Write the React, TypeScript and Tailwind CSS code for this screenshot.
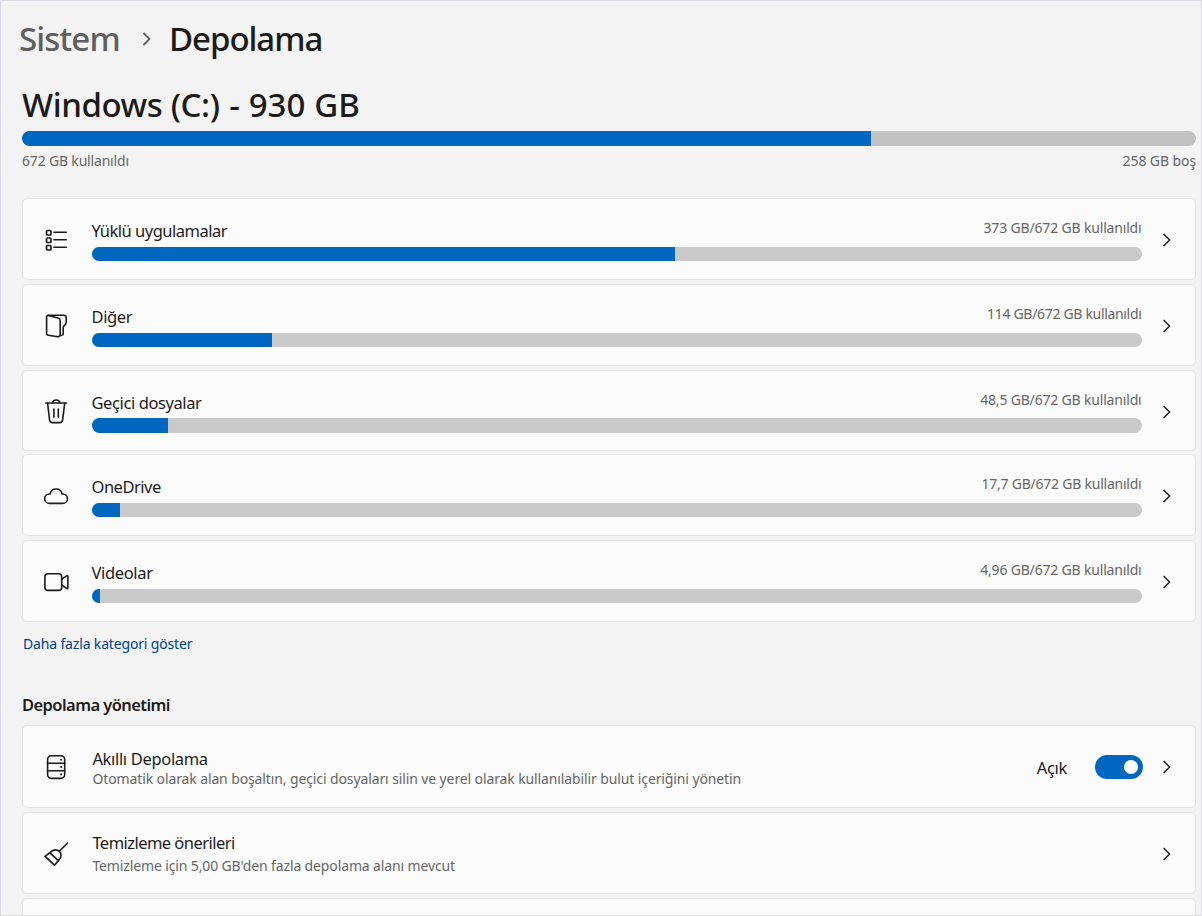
import { type ReactNode } from "react";
import clsx from "clsx";

const Icon = ({ children }: { children: ReactNode }) => (
  <svg
    width="28"
    height="28"
    viewBox="0 0 28 28"
    fill="none"
    stroke="#1b1b1b"
    strokeWidth="1.6"
    strokeLinecap="round"
    strokeLinejoin="round"
    className="shrink-0"
  >
    {children}
  </svg>
);

const AppsIcon = () => (
  <Icon>
    <g strokeWidth="1.7">
      <rect x="4.5" y="4.5" width="4.5" height="4.5" rx="1" />
      <rect x="4.5" y="12" width="4.5" height="4.5" rx="1" />
      <rect x="4.5" y="19.5" width="4.5" height="4.5" rx="1" />
    </g>
    <path d="M11.9 6.3H24.3M11.9 13.7H24.3M11.9 21.2H24.3" strokeWidth="1.5" />
  </Icon>
);

const OtherIcon = () => (
  <Icon>
    <path d="M6.1 3.5 16.2 6A2.3 2.3 0 0 1 18.2 8.2V22.6A2.1 2.1 0 0 1 15.8 24.7L6.3 23.3A1.9 1.9 0 0 1 4.6 21.4V4.9A1.3 1.3 0 0 1 6.1 3.5Z" />
    <path d="M5.8 3.2H21.8A2.4 2.4 0 0 1 24.2 5.6V10.2C24.2 13.4 21.2 12.8 21.2 15.8V21.4A2 2 0 0 1 18.3 23.2" />
  </Icon>
);

const TrashIcon = () => (
  <Icon>
    <path d="M3.8 5H24.5M10.7 4.8a3.5 2.8 0 0 1 7 0" />
    <path d="M5.6 5.2 7.6 22.2A2.7 2.7 0 0 0 10.3 24.6H17.9A2.7 2.7 0 0 0 20.6 22.2L22.7 5.2" />
    <path d="M11.9 11.1V19.3M16.3 11.1V19.3" />
  </Icon>
);

const CloudIcon = () => (
  <Icon>
    <path d="M7.4 21.4a4.7 4.7 0 0 1 0-9.4h.7a6.1 6.1 0 0 1 12 0h.7a4.7 4.7 0 0 1 0 9.4Z" />
  </Icon>
);

const VideoIcon = () => (
  <Icon>
    <rect x="2.9" y="5.8" width="16.8" height="16.6" rx="3" />
    <path d="M19.8 11.2 24.6 7.8A.8.8 0 0 1 25.9 8.5V19.7A.8.8 0 0 1 24.6 20.4L19.8 17" />
  </Icon>
);

const StorageIcon = () => (
  <Icon>
    <rect x="5.6" y="2.8" width="17.1" height="22.6" rx="3.8" />
    <path d="M5.6 10.3H22.7M5.6 17.8H22.7" />
    <path d="M19.1 6.7v.1M19.1 14v.1M19.1 21.3v.1" strokeWidth="2" />
  </Icon>
);

const BroomIcon = () => (
  <Icon>
    <path d="M25.4 3.2 17.8 10.7" />
    <path d="M3 16.4 9.2 11.6C11.6 9.3 15.2 9.3 17.4 11.3S19.5 17 17.4 19.4L12.5 25.2Z" />
    <path d="M7.9 12.8 16.3 20.7" />
  </Icon>
);

const Chevron = () => (
  <svg width="8" height="14" viewBox="0 0 8 14" fill="none" stroke="#222" strokeWidth="1.5" className="shrink-0">
    <path d="M.6 1 6.6 7 .6 13" />
  </svg>
);

const categories = [
  { name: "Yüklü uygulamalar", nameClass: "tracking-[-0.5px]", usage: "373 GB/672 GB kullanıldı", usageClass: "tracking-[-0.17px]", fill: 583, icon: <AppsIcon />, size: "h-[82px] mb-1" },
  { name: "Diğer", nameClass: "tracking-[-0.4px]", usage: "114 GB/672 GB kullanıldı", usageClass: "tracking-[-0.32px]", fill: 180, icon: <OtherIcon />, size: "h-[82px] mb-1" },
  { name: "Geçici dosyalar", nameClass: "tracking-[-0.4px]", usage: "48,5 GB/672 GB kullanıldı", usageClass: "tracking-[-0.18px]", fill: 76.5, icon: <TrashIcon />, size: "h-[81px] mb-[3px]" },
  { name: "OneDrive", nameClass: "tracking-[-0.5px]", usage: "17,7 GB/672 GB kullanıldı", usageClass: "tracking-[-0.23px]", fill: 28, icon: <CloudIcon />, size: "h-[82px] mb-1" },
  { name: "Videolar", nameClass: "tracking-[-0.35px]", usage: "4,96 GB/672 GB kullanıldı", usageClass: "tracking-[-0.18px]", fill: 8, icon: <VideoIcon />, size: "h-[82px]" },
];

const Bar = ({ fill, className }: { fill: number; className?: string }) => (
  <div className={clsx("overflow-hidden rounded-full", className)}>
    <div className="h-full bg-[#0067c0]" style={{ width: fill }} />
  </div>
);

const card = "flex items-center rounded-[5px] border border-[#e5e5e5] bg-[#fbfbfb] pl-[19px] pr-6";

export default function App() {
  return (
    <div className="h-[916px] w-[1202px] overflow-hidden border border-[#d9dae6] bg-[#f3f3f3] pl-[21px] pr-[5px] font-['Noto_Sans',sans-serif] text-[#1b1b1b]">
      <nav className="-ml-[3px] flex h-[76px] items-center text-[33px] font-medium">
        <span className="w-[123px] tracking-[-0.85px] text-[#5f5f5f]">Sistem</span>
        <svg width="9" height="14" viewBox="0 0 9 14" fill="none" stroke="#5f5f5f" strokeWidth="1.8">
          <path d="M1.5 1 7.5 7 1.5 13" />
        </svg>
        <span className="ml-[18px] tracking-[-1.05px]">Depolama</span>
      </nav>

      <h1 className="mt-[9px] h-[45px] whitespace-nowrap text-[33px] font-medium leading-[38px]">
        <span className="tracking-[-0.4px]">Windows (C:)</span>
        <span className="ml-px tracking-[0.1px]"> - 930 GB</span>
      </h1>
      <Bar fill={848.5} className="h-[14.5px] bg-[#c2c2c2]" />
      <div className="mt-[5.5px] flex h-[47px] justify-between text-[14px] leading-[20px] text-[#666]">
        <span className="tracking-[-0.18px]">672 GB kullanıldı</span>
        <span className="tracking-[-0.1px]">258 GB boş</span>
      </div>

      {categories.map((c) => (
        <div key={c.name} className={clsx(card, "justify-between pt-[2px]", c.size)}>
          {c.icon}
          <div className="h-[42px] w-[1050px]">
            <div className="flex h-[27.5px] justify-between">
              <span className={clsx("mt-[1px] text-[16.5px] leading-[22px]", c.nameClass)}>{c.name}</span>
              <span className={clsx("text-[14px] leading-[18px] text-[#666]", c.usageClass)}>{c.usage}</span>
            </div>
            <Bar fill={c.fill} className="h-[14.5px] bg-[#c9c9c9]" />
          </div>
          <Chevron />
        </div>
      ))}

      <a className="mt-3 block h-[48px] pl-px text-[14px] leading-[20px] tracking-[-0.16px] text-[#003e92]">
        Daha fazla kategori göster
      </a>
      <h2 className="h-[43px] pt-3 text-[16.5px] font-semibold leading-[22px] tracking-[-0.57px]">Depolama yönetimi</h2>

      <div className={clsx(card, "mb-1 h-[83px]")}>
        <StorageIcon />
        <div className="ml-[22.4px] flex-1 pt-[2px]">
          <div className="text-[16.5px] leading-[22px] tracking-[-0.33px]">Akıllı Depolama</div>
          <div className="text-[14px] leading-[18px] tracking-[-0.115px] text-[#666]">
            Otomatik olarak alan boşaltın, geçici dosyaları silin ve yerel olarak kullanılabilir bulut içeriğini yönetin
          </div>
        </div>
        <span className="mr-[28px] pt-[3px] text-[16.5px] tracking-[-0.3px]">Açık</span>
        <button className="mr-5 flex h-6 w-12 items-center justify-end rounded-full bg-[#0067c0] pr-[5px]">
          <span className="size-[14px] rounded-full bg-white" />
        </button>
        <Chevron />
      </div>

      <div className={clsx(card, "mb-1 h-[82px] pt-[2px]")}>
        <BroomIcon />
        <div className="ml-[22.4px] flex-1 pb-[2px]">
          <div className="text-[16.5px] leading-[22px] tracking-[-0.54px]">Temizleme önerileri</div>
          <div className="mt-[3px] text-[14px] leading-[18px] tracking-[-0.13px] text-[#666]">
            Temizleme için 5,00 GB'den fazla depolama alanı mevcut
          </div>
        </div>
        <Chevron />
      </div>

      <div className={clsx(card, "h-[82px]")} />
    </div>
  );
}
